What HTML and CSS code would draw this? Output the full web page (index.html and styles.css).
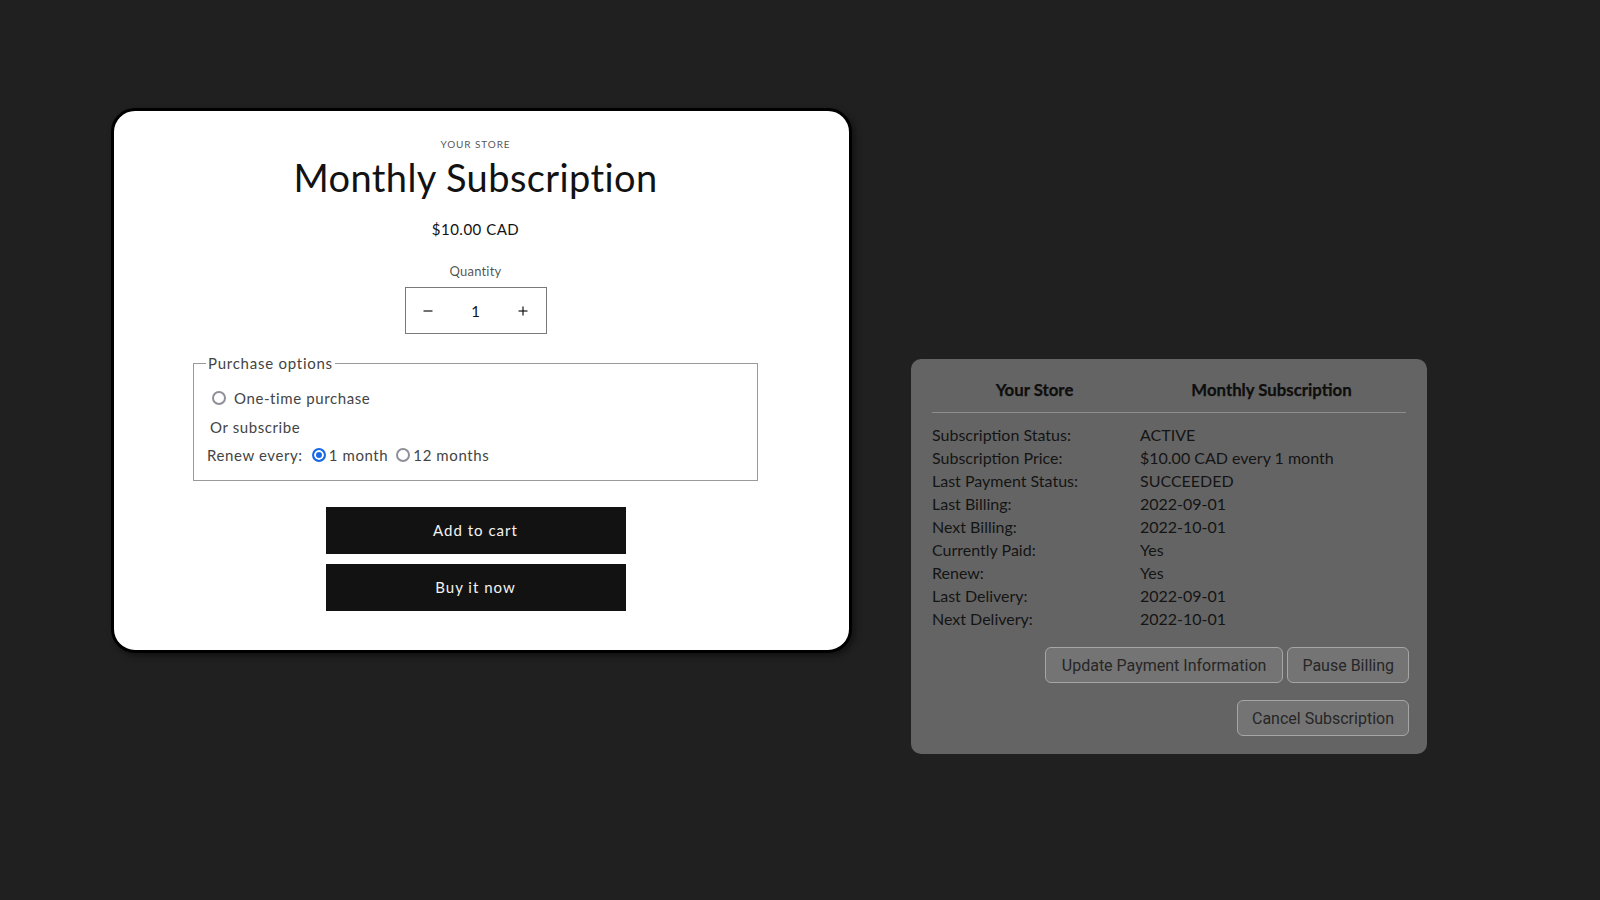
FILE: index.html
```html
<!DOCTYPE html>
<html lang="en">
<head>
<meta charset="utf-8">
<title>Monthly Subscription</title>
<link rel="stylesheet" href="styles.css">
</head>
<body>
  <main class="card">
    <div class="product">
      <p class="caption">Your Store</p>
      <h1 class="title">Monthly Subscription</h1>
      <p class="price">$10.00 CAD</p>
      <label class="qty-label">Quantity</label>
      <div class="qty">
        <button class="qty-btn" type="button" aria-label="Decrease">
          <svg width="10" height="10" viewBox="0 0 10 10"><line x1="0.5" y1="5" x2="9.5" y2="5" stroke="#121212" stroke-width="1.2"/></svg>
        </button>
        <span class="qty-value">1</span>
        <button class="qty-btn" type="button" aria-label="Increase">
          <svg width="10" height="10" viewBox="0 0 10 10"><line x1="0.5" y1="5" x2="9.5" y2="5" stroke="#121212" stroke-width="1.2"/><line x1="5" y1="0.5" x2="5" y2="9.5" stroke="#121212" stroke-width="1.2"/></svg>
        </button>
      </div>
      <fieldset class="options">
        <legend>Purchase options</legend>
        <div class="opt-row opt-once">
          <input type="radio" name="plan" class="radio"><span class="opt-text">One-time purchase</span>
        </div>
        <div class="opt-row opt-or">Or subscribe</div>
        <div class="opt-row opt-renew">
          <span class="renew-label">Renew every:</span>
          <input type="radio" name="plan" class="radio" checked><span class="opt-text tight">1 month</span>
          <input type="radio" name="plan" class="radio second"><span class="opt-text tight">12 months</span>
        </div>
      </fieldset>
      <button class="btn-dark first" type="button">Add to cart</button>
      <button class="btn-dark" type="button">Buy it now</button>
    </div>
  </main>

  <section class="panel">
    <div class="panel-head">
      <div class="head-cell">Your Store</div>
      <div class="head-cell">Monthly Subscription</div>
    </div>
    <div class="rows">
      <div class="lbl">Subscription Status:</div><div class="val">ACTIVE</div>
      <div class="lbl">Subscription Price:</div><div class="val">$10.00 CAD every 1 month</div>
      <div class="lbl">Last Payment Status:</div><div class="val">SUCCEEDED</div>
      <div class="lbl">Last Billing:</div><div class="val">2022-09-01</div>
      <div class="lbl">Next Billing:</div><div class="val">2022-10-01</div>
      <div class="lbl">Currently Paid:</div><div class="val">Yes</div>
      <div class="lbl">Renew:</div><div class="val">Yes</div>
      <div class="lbl">Last Delivery:</div><div class="val">2022-09-01</div>
      <div class="lbl">Next Delivery:</div><div class="val">2022-10-01</div>
    </div>
    <div class="actions">
      <div class="action-row">
        <button class="btn-gray" type="button">Update Payment Information</button>
        <button class="btn-gray" type="button">Pause Billing</button>
      </div>
      <div class="action-row">
        <button class="btn-gray" type="button">Cancel Subscription</button>
      </div>
    </div>
  </section>
</body>
</html>
```

FILE: styles.css
```css
* { box-sizing: border-box; }

html, body {
  margin: 0;
  height: 900px;
}

body {
  background: #202020;
  display: flex;
  align-items: flex-start;
  padding: 108px 0 0 111px;
  font-family: Lato, "Liberation Sans", sans-serif;
  overflow: hidden;
}

/* ---------- product card ---------- */
.card {
  width: 741px;
  background: #fff;
  border: 3px solid #000;
  border-radius: 24px;
  box-shadow: 3px 3px 6px rgba(0, 0, 0, 0.45);
  color: #121212;
}

.product {
  display: flex;
  flex-direction: column;
  align-items: center;
  padding: 27px 12px 39px 0;
}

.caption {
  margin: 0;
  font-size: 10px;
  line-height: 12px;
  letter-spacing: 0.9px;
  text-transform: uppercase;
  color: rgba(18, 18, 18, 0.75);
}

.title {
  margin: 4px 0 0;
  font-size: 38px;
  line-height: 46px;
  font-weight: 400;
  letter-spacing: 0.4px;
}

.price {
  margin: 19px 0 0;
  font-size: 15px;
  line-height: 20px;
  letter-spacing: 0.5px;
}

.qty-label {
  margin-top: 24px;
  font-size: 13px;
  line-height: 16px;
  letter-spacing: 0.2px;
  color: rgba(18, 18, 18, 0.75);
}

.qty {
  margin-top: 8px;
  width: 142px;
  height: 47px;
  border: 1px solid #7a7a7a;
  display: flex;
  align-items: center;
}

.qty-btn {
  width: 45px;
  height: 100%;
  border: 0;
  background: transparent;
  padding: 0;
  display: flex;
  align-items: center;
  justify-content: center;
}

.qty-value {
  flex: 1;
  text-align: center;
  font-size: 15px;
  color: #121212;
}

.options {
  margin: 20px 0 0;
  width: 565px;
  border: 1px solid #9a9a9a;
  padding: 12px 12px 10px;
  color: #444;
  font-size: 15px;
  letter-spacing: 0.6px;
}

.options legend {
  padding: 0 2px;
  font-size: 15px;
  line-height: 18px;
  letter-spacing: 0.75px;
  color: #444;
}

.opt-row {
  display: flex;
  align-items: center;
  height: 28.5px;
  line-height: 28px;
}

.opt-once { padding-left: 6px; }
.opt-or { padding-left: 4px; }
.opt-renew { padding-left: 1px; }

.radio {
  appearance: none;
  -webkit-appearance: none;
  margin: 0;
  width: 14px;
  height: 14px;
  border-radius: 50%;
  border: 2px solid #8f8f99;
  background: #fff;
  flex: none;
}

.radio:checked {
  border-color: #1a6ae6;
  background: #1a6ae6;
  box-shadow: inset 0 0 0 2px #fff;
}

.opt-text { margin-left: 8px; }
.opt-text.tight { margin-left: 3px; }
.renew-label { margin-right: 9px; }
.radio.second { margin-left: 8px; }

.btn-dark {
  width: 300px;
  height: 47px;
  border: 0;
  background: #121212;
  color: #f3f3f3;
  font-family: Lato, "Liberation Sans", sans-serif;
  font-size: 15px;
  letter-spacing: 1px;
  margin-top: 10px;
  padding: 0;
}

.btn-dark.first { margin-top: 26px; }

/* ---------- subscription panel ---------- */
.panel {
  margin: 251px 0 0 59px;
  width: 516px;
  background: #646464;
  border-radius: 10px;
  padding: 19px 21px 18px;
  color: #141414;
  font-size: 16px;
}

.panel-head {
  display: grid;
  grid-template-columns: 205px 1fr;
  padding-bottom: 11px;
  border-bottom: 1px solid #8e8e8e;
}

.head-cell {
  text-align: center;
  font-weight: 700;
  font-size: 16.8px;
  line-height: 23px;
  color: #0e0e0e;
  -webkit-text-stroke: 0.25px #0e0e0e;
}

.rows {
  margin-top: 10px;
  display: grid;
  grid-template-columns: 208px 1fr;
  line-height: 23px;
}

.actions {
  margin: 17px -3px 0 0;
  display: flex;
  flex-direction: column;
  align-items: flex-end;
  gap: 17px;
}

.action-row {
  display: flex;
  gap: 4px;
}

.btn-gray {
  height: 36px;
  padding: 0 15px;
  background: #747474;
  border: 1px solid #a6a6a6;
  border-radius: 6px;
  color: #262626;
  font-family: Roboto, "Liberation Sans", sans-serif;
  font-size: 16px;
}

.btn-gray:last-child { padding: 0 14px; }
.action-row:first-child .btn-gray:first-child { padding: 0 16px; }
```
